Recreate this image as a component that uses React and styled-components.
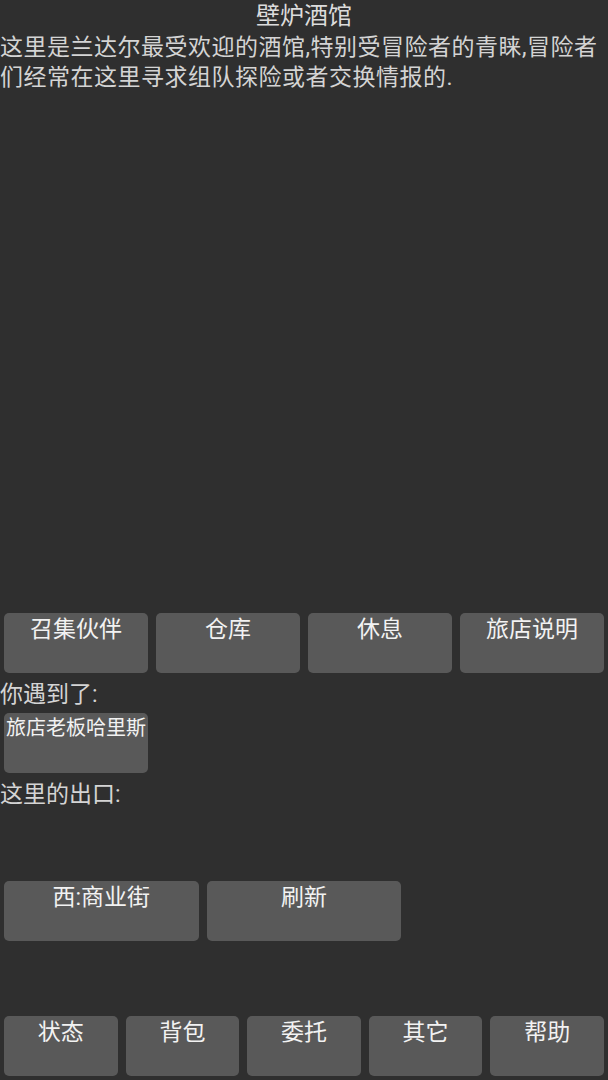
import React from "react";
import styled, { createGlobalStyle } from "styled-components";

const GlobalStyle = createGlobalStyle`
  html, body {
    margin: 0;
    padding: 0;
    background: #2f2f2f;
  }
  body {
    font-family: Roboto, "Noto Sans CJK SC", sans-serif;
  }
`;

const Screen = styled.div`
  width: 608px;
  height: 1080px;
  display: flex;
  flex-direction: column;
  background: #2f2f2f;
  color: #d6d6d6;
  overflow: hidden;
`;

const Title = styled.div`
  font-size: 24px;
  line-height: 32px;
  text-align: center;
  color: #dcdcdc;
`;

const Description = styled.p`
  margin: 0;
  padding-top: 1px;
  font-size: 23px;
  line-height: 30px;
  letter-spacing: 0.5px;
  color: #d4d4d4;
`;

const Scene = styled.div`
  flex: 1;
`;

const Row = styled.div`
  display: grid;
  grid-template-columns: repeat(${(p) => p.cols}, 1fr);
  height: 68px;
  flex-shrink: 0;
`;

const Button = styled.button`
  margin: 4px;
  height: 60px;
  padding: 1px 0 0;
  border: none;
  border-radius: 5px;
  background: #595959;
  color: #f2f2f2;
  font-family: inherit;
  font-size: ${(p) => (p.small ? "20px" : "23px")};
  line-height: ${(p) => (p.small ? "29px" : "32px")};
  text-align: center;
  display: flex;
  justify-content: center;
  align-items: flex-start;
  white-space: nowrap;
  overflow: hidden;
  cursor: pointer;
`;

const Label = styled.div`
  font-size: 23px;
  line-height: 32px;
  height: 32px;
  padding-top: 2px;
  box-sizing: border-box;
  color: #d4d4d4;
  flex-shrink: 0;
`;

const Gap = styled.div`
  height: ${(p) => p.h}px;
  flex-shrink: 0;
`;

const actions = ["召集伙伴", "仓库", "休息", "旅店说明"];
const exits = ["西:商业街", "刷新"];
const nav = ["状态", "背包", "委托", "其它", "帮助"];

export default function App() {
  return (
    <>
      <GlobalStyle />
      <Screen>
        <Title>壁炉酒馆</Title>
        <Description>
          这里是兰达尔最受欢迎的酒馆,特别受冒险者的青睐,冒险者们经常在这里寻求组队探险或者交换情报的.
        </Description>
        <Scene />
        <Row cols={4}>
          {actions.map((a) => (
            <Button key={a}>{a}</Button>
          ))}
        </Row>
        <Label>你遇到了:</Label>
        <Row cols={4}>
          <Button small>旅店老板哈里斯</Button>
        </Row>
        <Label>这里的出口:</Label>
        <Gap h={68} />
        <Row cols={3}>
          {exits.map((e) => (
            <Button key={e}>{e}</Button>
          ))}
        </Row>
        <Gap h={67} />
        <Row cols={5}>
          {nav.map((n) => (
            <Button key={n}>{n}</Button>
          ))}
        </Row>
      </Screen>
    </>
  );
}
